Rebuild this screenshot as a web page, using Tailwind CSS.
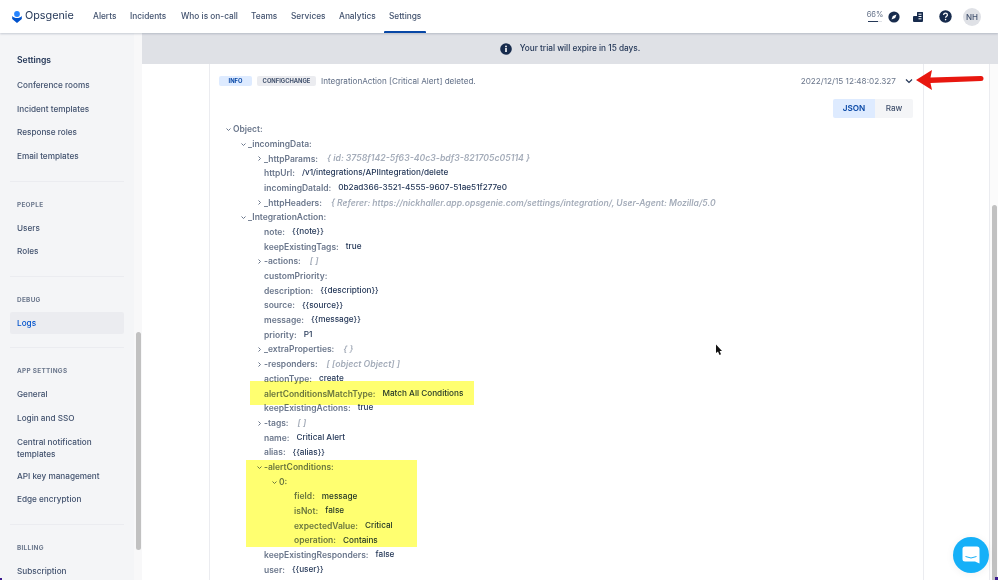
<!DOCTYPE html>
<html lang="en">
  <head>
    <meta charset="UTF-8" />
    <title>Opsgenie logs</title>
    <script src="https://cdn.jsdelivr.net/npm/@tailwindcss/browser@4"></script>
  </head>
  <body class="w-[998px] h-[580px] overflow-hidden bg-white font-['Inter',sans-serif] text-[#42526e] relative">
    <!-- top nav -->
    <header class="h-[33px] flex items-center bg-white relative z-10 shadow-[0_1px_2px_rgba(9,30,66,0.2)]">
      <div class="flex items-center w-[93px] pl-[12px] gap-[3px]">
        <svg width="10" height="12" viewBox="0 0 10 12"><circle cx="5" cy="3" r="2.9" fill="#2684ff"/><path d="M0.2 5 C1.5 6.4 3 7 5 7 C7 7 8.5 6.4 9.8 5 L9.8 8 L5 12 L0.2 8Z" fill="#0052cc"/></svg>
        <span class="text-[10.8px] leading-none text-[#253858]">Opsgenie</span>
      </div>
      <nav class="flex h-full text-[8.3px] text-[#42526e] font-medium gap-[15px] whitespace-nowrap">
        <a class="flex items-center w-[22px]">Alerts</a>
        <a class="flex items-center w-[36px]">Incidents</a>
        <a class="flex items-center w-[55px]">Who is on-call</a>
        <a class="flex items-center w-[25px]">Teams</a>
        <a class="flex items-center w-[33px]">Services</a>
        <a class="flex items-center w-[35px]">Analytics</a>
        <a class="flex items-center w-[33px] relative">Settings<span class="absolute left-[-5px] right-[-4px] bottom-0 h-[2px] rounded-t-[1px] bg-[#0747a6]"></span></a>
      </nav>
      <div class="ml-auto flex items-center pr-[17px]">
        <div class="flex flex-col items-center w-[16px] mr-[5px]">
          <span class="text-[7.5px] leading-none text-[#5e6c84]">66%</span>
          <span class="w-[14px] h-[1.5px] bg-[#dfe1e6] mt-[2px] block"><span class="block w-[10px] h-full bg-[#253858]"></span></span>
        </div>
        <svg class="mr-[12px]" width="12" height="12" viewBox="0 0 12 12"><circle cx="6" cy="6" r="5.6" fill="#172b4d"/><path d="M3.5 8.5 L4.8 5 L8.5 3.5 L7.2 7Z" fill="#fff"/></svg>
        <svg class="mr-[15px]" width="12" height="12" viewBox="0 0 12 12"><path d="M5 1.5 Q5 1 5.5 1 H10.5 Q11 1 11 1.5 V10 Q11 11 10 11 H2 Q1 11 1 10 V6 Q1 5 2 5 H5Z" fill="#172b4d"/><path d="M6.5 3.2 H9.5 M6.5 5.5 H9.5 M6.5 7.8 H9.5" stroke="#fff" stroke-width="1"/></svg>
        <svg class="mr-[11px]" width="13" height="13" viewBox="0 0 13 13"><circle cx="6.5" cy="6.5" r="6.2" fill="#172b4d"/><path d="M4.6 5 C4.7 3.8 5.5 3.2 6.5 3.2 C7.6 3.2 8.4 3.9 8.4 4.9 C8.4 6.3 6.6 6.2 6.6 7.8" stroke="#fff" stroke-width="1.3" fill="none"/><circle cx="6.6" cy="9.6" r="0.8" fill="#fff"/></svg>
        <span class="w-[18px] h-[18px] rounded-full bg-[#dfe1e6] flex items-center justify-center text-[8px] font-medium text-[#42526e]">NH</span>
      </div>
    </header>

    <div class="flex h-[547px]">
      <!-- side menu -->
      <aside class="w-[142px] shrink-0 bg-[#f4f5f7] relative text-[8.2px] font-medium text-[#42526e] pl-[10px] pr-[18px] overflow-hidden">
        <span class="absolute left-[134px] top-0 bottom-0 w-[8px] bg-[#f8f8f9]"></span>
        <div class="pl-[7px] pt-[17px] h-[37px] mb-[4px] flex items-center text-[8.6px] font-semibold text-[#253858]">Settings</div>
        <a class="block pl-[7px] h-[23.7px] leading-[23.7px]">Conference rooms</a>
        <a class="block pl-[7px] h-[23.7px] leading-[23.7px]">Incident templates</a>
        <a class="block pl-[7px] h-[23.7px] leading-[23.7px]">Response roles</a>
        <a class="block pl-[7px] h-[23.7px] leading-[23.7px]">Email templates</a>
        <div class="h-[1px] bg-[#ebecf0] mt-[12px]"></div>
        <p class="pl-[7px] mt-[18px] mb-[7px] h-[10px] leading-[10px] text-[6.4px] font-bold tracking-[0.3px] text-[#6b778c]">PEOPLE</p>
        <a class="block pl-[7px] h-[23.7px] leading-[23.7px]">Users</a>
        <a class="block pl-[7px] h-[23.7px] leading-[23.7px]">Roles</a>
        <div class="h-[1px] bg-[#ebecf0] mt-[12px]"></div>
        <p class="pl-[7px] mt-[18px] mb-[7px] h-[10px] leading-[10px] text-[6.4px] font-bold tracking-[0.3px] text-[#6b778c]">DEBUG</p>
        <a class="block pl-[7px] h-[22px] leading-[22px] rounded-[2px] bg-[#ebecf0] text-[#0052cc]">Logs</a>
        <div class="h-[1px] bg-[#ebecf0] mt-[13px]"></div>
        <p class="pl-[7px] mt-[18px] mb-[7px] h-[10px] leading-[10px] text-[6.4px] font-bold tracking-[0.3px] text-[#6b778c]">APP SETTINGS</p>
        <a class="block pl-[7px] h-[23.7px] leading-[23.7px]">General</a>
        <a class="block pl-[7px] h-[23.7px] leading-[23.7px]">Login and SSO</a>
        <a class="block pl-[7px] py-[5px] leading-[12px]">Central notification templates</a>
        <a class="block pl-[7px] h-[23.7px] leading-[23.7px]">API key management</a>
        <a class="block pl-[7px] h-[23.7px] leading-[23.7px]">Edge encryption</a>
        <div class="h-[1px] bg-[#ebecf0] mt-[12px]"></div>
        <p class="pl-[7px] mt-[18px] mb-[7px] h-[10px] leading-[10px] text-[6.4px] font-bold tracking-[0.3px] text-[#6b778c]">BILLING</p>
        <a class="block pl-[7px] h-[23.7px] leading-[23.7px]">Subscription</a>
        <span class="absolute left-[136px] top-[299px] w-[4.5px] h-[218px] rounded-full bg-[#c1c1c1]"></span>
      </aside>

      <main class="flex-1 flex flex-col min-w-0 relative">
        <div class="h-[31px] bg-[#dfe1e6] flex items-center justify-center gap-[8px] text-[8.25px] font-medium text-[#253858]">
          <svg width="12" height="12" viewBox="0 0 12 12"><circle cx="6" cy="6" r="5.8" fill="#172b4d"/><rect x="5.2" y="5" width="1.6" height="4" fill="#fff"/><circle cx="6" cy="3.4" r="0.9" fill="#fff"/></svg>
          Your trial will expire in 15 days.
        </div>
        <div class="flex-1 pl-[67px] pr-[74px]">
          <section class="h-full border-x border-[#ebecf0] relative text-[8.2px]">
            <div class="flex items-center h-[34px] pl-[9px] pr-[10px]">
              <span class="w-[33px] h-[10px] mr-[5px] rounded-[2px] bg-[#deebff] text-[#0747a6] text-[5.8px] font-bold flex items-center justify-center">INFO</span>
              <span class="w-[59px] h-[10px] mr-[5px] rounded-[2px] bg-[#ebecf0] text-[#42526e] text-[5.8px] font-bold flex items-center justify-center">CONFIGCHANGE</span>
              <span class="text-[8.15px] text-[#5e6c84]">IntegrationAction [Critical Alert] deleted.</span>
              <span class="ml-auto text-[8.2px] text-[#6b778c] mr-[9px]">2022/12/15 12:48:02.327</span>
              <svg width="8" height="6" viewBox="0 0 8 6"><path d="M1 1.5 L4 4.5 L7 1.5" stroke="#253858" stroke-width="1.2" fill="none"/></svg>
            </div>
            <div class="flex justify-end pr-[10px] h-[19px] mt-[1px]">
              <span class="w-[42px] bg-[#deebff] text-[#0747a6] font-semibold flex items-center justify-center rounded-l-[2px]">JSON</span>
              <span class="w-[38px] bg-[#f4f5f7] text-[#42526e] font-medium flex items-center justify-center rounded-r-[2px]">Raw</span>
            </div>

            <!-- json tree -->
            <div class="mt-[4.2px] text-[8.5px] font-semibold text-[#6b778c] whitespace-nowrap">
              <div class="flex items-center h-[14.7px] pl-[23px]"><svg class="-ml-[7px] mr-[2px]" width="5" height="5" viewBox="0 0 5 5"><path d="M0.5 1.5 L2.5 3.5 L4.5 1.5" stroke="#6b778c" fill="none"/></svg>Object:</div>
              <div class="flex items-center h-[14.7px] pl-[38px]"><svg class="-ml-[7px] mr-[2px]" width="5" height="5" viewBox="0 0 5 5"><path d="M0.5 1.5 L2.5 3.5 L4.5 1.5" stroke="#6b778c" fill="none"/></svg>_incomingData:</div>
              <div class="flex items-center h-[14.7px] pl-[54px] gap-[9px]"><span class="flex items-center"><svg class="-ml-[7px] mr-[2px]" width="5" height="5" viewBox="0 0 5 5"><path d="M1.5 0.5 L3.5 2.5 L1.5 4.5" stroke="#6b778c" fill="none"/></svg>_httpParams:</span><i class="text-[8.7px] text-[#a5adba]">{ id: 3758f142-5f63-40c3-bdf3-821705c05114 }</i></div>
              <div class="flex items-center h-[14.7px] pl-[54px] gap-[7px]"><span>httpUrl:</span><span class="mb-[2px] text-[8.2px] font-medium text-[#253858]">/v1/integrations/APIIntegration/delete</span></div>
              <div class="flex items-center h-[14.7px] pl-[54px] gap-[7px]"><span>incomingDataId:</span><span class="mb-[2px] text-[8.2px] font-medium text-[#253858]">0b2ad366-3521-4555-9607-51ae51f277e0</span></div>
              <div class="flex items-center h-[14.7px] pl-[54px] gap-[9px]"><span class="flex items-center"><svg class="-ml-[7px] mr-[2px]" width="5" height="5" viewBox="0 0 5 5"><path d="M1.5 0.5 L3.5 2.5 L1.5 4.5" stroke="#6b778c" fill="none"/></svg>_httpHeaders:</span><i class="text-[8.6px] text-[#a5adba]">{ Referer: https://nickhaller.app.opsgenie.com/settings/integration/, User-Agent: Mozilla/5.0</i></div>
              <div class="flex items-center h-[14.7px] pl-[38px]"><svg class="-ml-[7px] mr-[2px]" width="5" height="5" viewBox="0 0 5 5"><path d="M0.5 1.5 L2.5 3.5 L4.5 1.5" stroke="#6b778c" fill="none"/></svg>_IntegrationAction:</div>
              <div class="flex items-center h-[14.7px] pl-[54px] gap-[7px]"><span>note:</span><span class="mb-[2px] text-[8.2px] font-medium text-[#253858]">{{note}}</span></div>
              <div class="flex items-center h-[14.7px] pl-[54px] gap-[7px]"><span>keepExistingTags:</span><span class="mb-[2px] text-[8.2px] font-medium text-[#253858]">true</span></div>
              <div class="flex items-center h-[14.7px] pl-[54px] gap-[9px]"><span class="flex items-center"><svg class="-ml-[7px] mr-[2px]" width="5" height="5" viewBox="0 0 5 5"><path d="M1.5 0.5 L3.5 2.5 L1.5 4.5" stroke="#6b778c" fill="none"/></svg>-actions:</span><i class="text-[8.7px] text-[#a5adba]">[ ]</i></div>
              <div class="flex items-center h-[14.7px] pl-[54px] gap-[7px]"><span>customPriority:</span></div>
              <div class="flex items-center h-[14.7px] pl-[54px] gap-[7px]"><span>description:</span><span class="mb-[2px] text-[8.2px] font-medium text-[#253858]">{{description}}</span></div>
              <div class="flex items-center h-[14.7px] pl-[54px] gap-[7px]"><span>source:</span><span class="mb-[2px] text-[8.2px] font-medium text-[#253858]">{{source}}</span></div>
              <div class="flex items-center h-[14.7px] pl-[54px] gap-[7px]"><span>message:</span><span class="mb-[2px] text-[8.2px] font-medium text-[#253858]">{{message}}</span></div>
              <div class="flex items-center h-[14.7px] pl-[54px] gap-[7px]"><span>priority:</span><span class="mb-[2px] text-[8.2px] font-medium text-[#253858]">P1</span></div>
              <div class="flex items-center h-[14.7px] pl-[54px] gap-[9px]"><span class="flex items-center"><svg class="-ml-[7px] mr-[2px]" width="5" height="5" viewBox="0 0 5 5"><path d="M1.5 0.5 L3.5 2.5 L1.5 4.5" stroke="#6b778c" fill="none"/></svg>_extraProperties:</span><i class="text-[8.7px] text-[#a5adba]">{ }</i></div>
              <div class="flex items-center h-[14.7px] pl-[54px] gap-[9px]"><span class="flex items-center"><svg class="-ml-[7px] mr-[2px]" width="5" height="5" viewBox="0 0 5 5"><path d="M1.5 0.5 L3.5 2.5 L1.5 4.5" stroke="#6b778c" fill="none"/></svg>-responders:</span><i class="text-[8.7px] text-[#a5adba]">[ [object Object] ]</i></div>
              <div class="flex items-center h-[14.7px] pl-[54px] gap-[7px]"><span>actionType:</span><span class="mb-[2px] text-[8.2px] font-medium text-[#253858]">create</span></div>
              <div class="flex items-center h-[14.7px] pl-[54px] gap-[7px]"><span>alertConditionsMatchType:</span><span class="mb-[2px] text-[8.2px] font-medium text-[#253858]">Match All Conditions</span></div>
              <div class="flex items-center h-[14.7px] pl-[54px] gap-[7px]"><span>keepExistingActions:</span><span class="mb-[2px] text-[8.2px] font-medium text-[#253858]">true</span></div>
              <div class="flex items-center h-[14.7px] pl-[54px] gap-[9px]"><span class="flex items-center"><svg class="-ml-[7px] mr-[2px]" width="5" height="5" viewBox="0 0 5 5"><path d="M1.5 0.5 L3.5 2.5 L1.5 4.5" stroke="#6b778c" fill="none"/></svg>-tags:</span><i class="text-[8.7px] text-[#a5adba]">[ ]</i></div>
              <div class="flex items-center h-[14.7px] pl-[54px] gap-[7px]"><span>name:</span><span class="mb-[2px] text-[8.2px] font-medium text-[#253858]">Critical Alert</span></div>
              <div class="flex items-center h-[14.7px] pl-[54px] gap-[7px]"><span>alias:</span><span class="mb-[2px] text-[8.2px] font-medium text-[#253858]">{{alias}}</span></div>
              <div class="flex items-center h-[14.7px] pl-[54px]"><svg class="-ml-[7px] mr-[2px]" width="5" height="5" viewBox="0 0 5 5"><path d="M0.5 1.5 L2.5 3.5 L4.5 1.5" stroke="#6b778c" fill="none"/></svg>-alertConditions:</div>
              <div class="flex items-center h-[14.7px] pl-[69px]"><svg class="-ml-[7px] mr-[2px]" width="5" height="5" viewBox="0 0 5 5"><path d="M0.5 1.5 L2.5 3.5 L4.5 1.5" stroke="#6b778c" fill="none"/></svg>0:</div>
              <div class="flex items-center h-[14.7px] pl-[84px] gap-[7px]"><span>field:</span><span class="mb-[2px] text-[8.2px] font-medium text-[#253858]">message</span></div>
              <div class="flex items-center h-[14.7px] pl-[84px] gap-[7px]"><span>isNot:</span><span class="mb-[2px] text-[8.2px] font-medium text-[#253858]">false</span></div>
              <div class="flex items-center h-[14.7px] pl-[84px] gap-[7px]"><span>expectedValue:</span><span class="mb-[2px] text-[8.2px] font-medium text-[#253858]">Critical</span></div>
              <div class="flex items-center h-[14.7px] pl-[84px] gap-[7px]"><span>operation:</span><span class="mb-[2px] text-[8.2px] font-medium text-[#253858]">Contains</span></div>
              <div class="flex items-center h-[14.7px] pl-[54px] gap-[7px]"><span>keepExistingResponders:</span><span class="mb-[2px] text-[8.2px] font-medium text-[#253858]">false</span></div>
              <div class="flex items-center h-[14.7px] pl-[54px] gap-[7px]"><span>user:</span><span class="mb-[2px] text-[8.2px] font-medium text-[#253858]">{{user}}</span></div>
            </div>

            <!-- highlighter marks drawn on the screenshot -->
            <span class="absolute left-[40px] top-[317px] w-[224px] h-[24px] bg-[#ffff70] mix-blend-multiply"></span>
            <span class="absolute left-[36px] top-[396px] w-[171px] h-[87px] bg-[#ffff70] mix-blend-multiply"></span>
          </section>
        </div>
        <!-- page scrollbar -->
        <div class="absolute left-[847px] top-[31px] bottom-0 w-[9px] bg-[#fbfbfb] border-l border-[#ebecf0]">
          <span class="absolute left-[2px] top-[141px] bottom-0 w-[4.5px] rounded-t-full bg-[#c1c1c1]"></span>
        </div>
      </main>
    </div>

    <!-- red arrow -->
    <svg class="absolute left-[910px] top-[64px]" width="78" height="30" viewBox="0 0 78 30"><path d="M6 16 L22 6 L20.5 13.5 L71 12 Q73.500 12 73.500 14.500 Q73.500 17 71 17 L20.500 19 L22 26Z" fill="#e8170f"/></svg>

    <!-- mouse cursor -->
    <svg class="absolute left-[715px] top-[344px]" width="8" height="12" viewBox="0 0 8 12"><path d="M1 0.500 L1 9 L3 7.500 L4.500 11 L6 10.300 L4.600 7 L7 7Z" fill="#111"/></svg>

    <!-- chat launcher -->
    <div class="absolute left-[953px] top-[537px] w-[36px] h-[36px] rounded-full bg-[#15b0f8] flex items-center justify-center shadow-[0_1px_8px_rgba(0,0,0,0.06)]">
      <svg width="18" height="18" viewBox="0 0 18 18"><path d="M3 0.500 H15 Q17.500 0.500 17.500 3 V17.500 L13 15.500 H3 Q0.500 15.500 0.500 13 V3 Q0.500 0.500 3 0.500Z" fill="#fff"/><path d="M3.500 10.500 Q9 13.500 14.500 10.500" stroke="#15b0f8" stroke-width="1" fill="none"/></svg>
    </div>
    <span class="absolute left-0 bottom-0 w-[2px] h-[2px] bg-[#3b1a8f]"></span>
    <span class="absolute right-0 bottom-0 w-[3px] h-[3px] bg-[#3b1a8f]"></span>
  </body>
</html>
